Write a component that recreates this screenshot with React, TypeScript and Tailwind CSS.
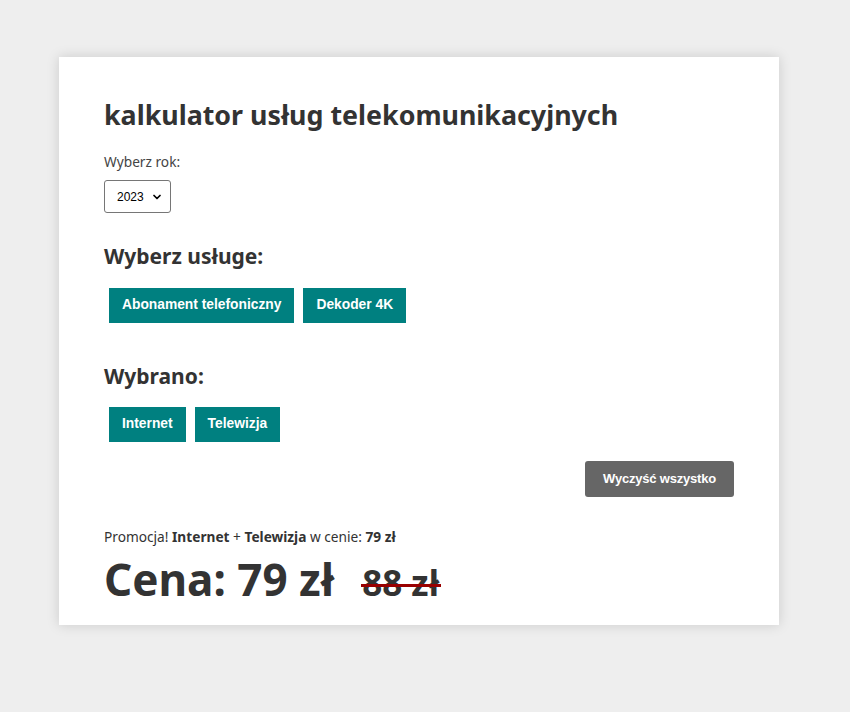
import { ChevronDown } from 'lucide-react';

const available = ['Abonament telefoniczny', 'Dekoder 4K'];
const chosen = ['Internet', 'Telewizja'];

function ServiceButton({ label }: { label: string }) {
  return (
    <button className="m-[5px] mr-[4px] h-[35px] bg-[#008080] px-[13px] text-[13.8px] font-bold text-white [font-family:'Liberation_Sans',Arial,sans-serif]">
      {label}
    </button>
  );
}

export default function App() {
  return (
    <div className="min-h-[712px] bg-[#eeeeee] pt-[57px] pl-[59px] text-[#333] [font-family:'Noto_Sans',sans-serif]">
      <div className="w-[720px] bg-white px-[45px] pt-[38px] pb-[18px] shadow-[0_0_12px_rgba(0,0,0,0.15)]">
        <h1 className="text-[26.8px] font-bold leading-[40px]">kalkulator usług telekomunikacyjnych</h1>

        <label className="mt-[18px] block text-[13.7px] leading-[18px] text-[#444]">Wyberz rok:</label>
        <div className="relative mt-[9px] inline-block">
          <select className="h-[33px] w-[67px] appearance-none rounded-[3px] border border-[#767676] bg-white pl-[12px] text-[12px] text-black [font-family:'Liberation_Sans',Arial,sans-serif]">
            <option>2023</option>
          </select>
          <ChevronDown className="pointer-events-none absolute right-[8px] top-[11px] h-[12px] w-[12px] text-black" strokeWidth={3.5} />
        </div>

        <h2 className="mt-[28px] text-[21px] font-bold leading-[30px]">Wyberz usługe:</h2>
        <div className="mt-[12px] flex flex-wrap">
          {available.map((s) => (
            <ServiceButton key={s} label={s} />
          ))}
        </div>

        <h2 className="mt-[33px] text-[21px] font-bold leading-[30px]">Wybrano:</h2>
        <div className="mt-[11px] flex flex-wrap">
          {chosen.map((s) => (
            <ServiceButton key={s} label={s} />
          ))}
        </div>

        <div className="mt-[14px] flex justify-end">
          <button className="h-[36px] rounded-[3px] bg-[#666] px-[18px] text-[13px] font-bold tracking-[-0.2px] text-white [font-family:'Liberation_Sans',Arial,sans-serif]">
            Wyczyść wszystko
          </button>
        </div>

        <p className="mt-[31px] text-[13.7px] leading-[18px] text-[#333]">
          Promocja! <b>Internet</b> + <b>Telewizja</b> w cenie: <b>79 zł</b>
        </p>
        <div className="mt-[5px] flex items-baseline gap-[28px]">
          <span className="text-[44px] font-bold leading-[56px]">Cena: 79 zł</span>
          <span className="relative text-[35px] font-bold leading-[40px]">
            88 zł
            <span className="absolute -left-[1px] -right-[2px] top-[52%] h-[3px] bg-[#990000]" />
          </span>
        </div>
      </div>
    </div>
  );
}
